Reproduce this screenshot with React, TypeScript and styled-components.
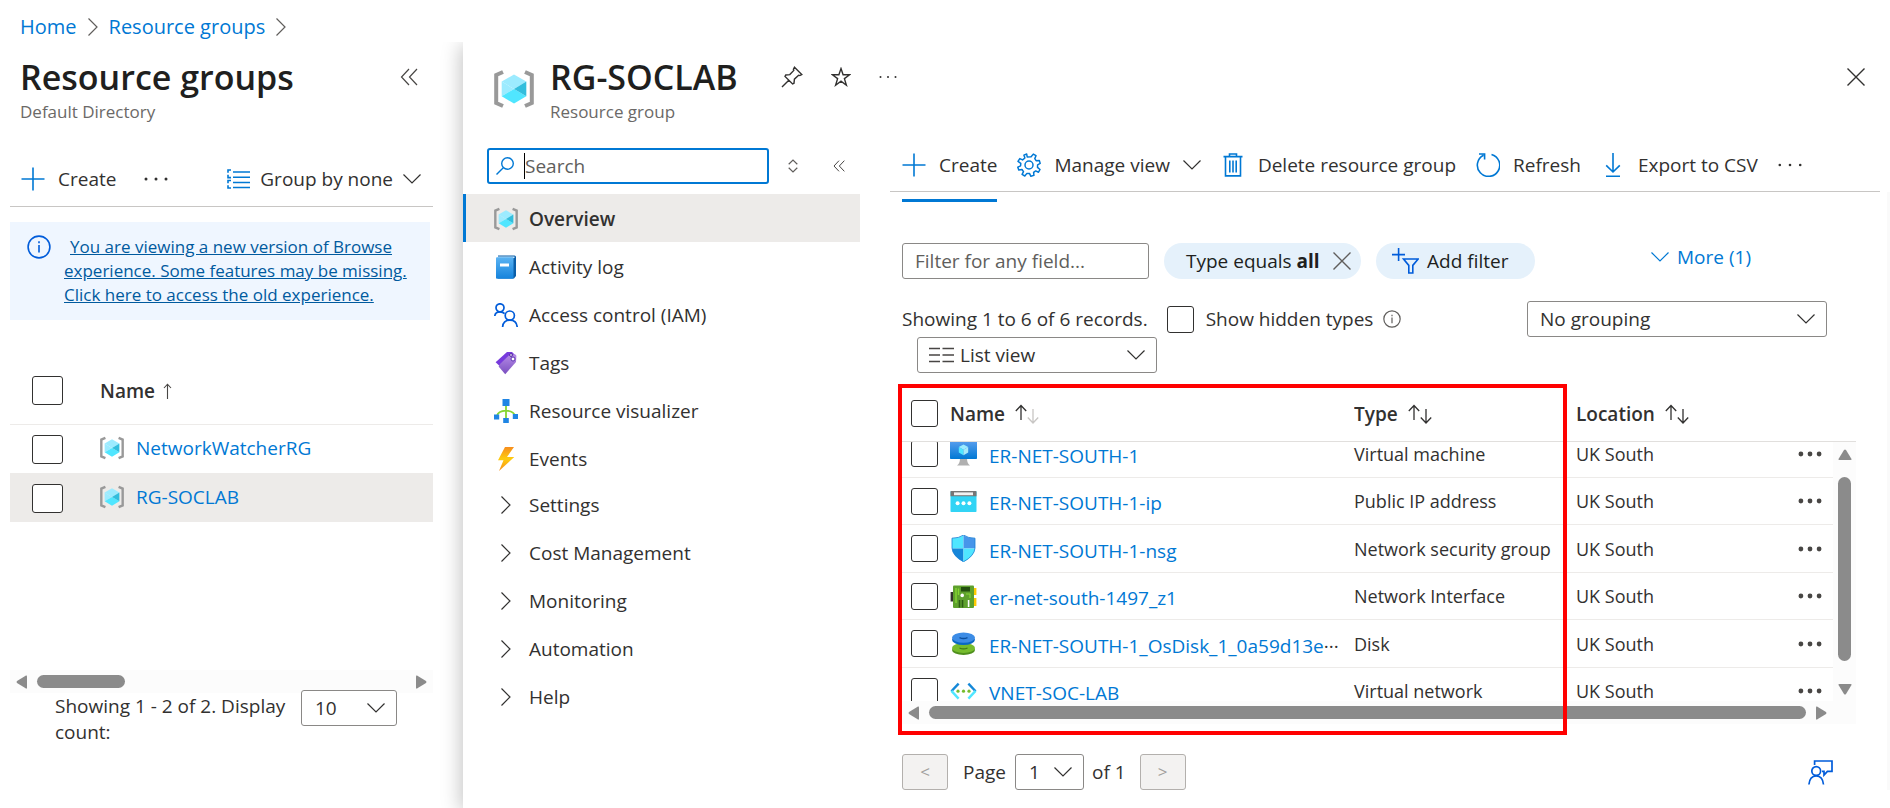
import React, { useLayoutEffect, useRef } from 'react';
import styled, { createGlobalStyle } from 'styled-components';

const GlobalStyle = createGlobalStyle`
  *, *::before, *::after { box-sizing: border-box; }
  body {
    margin: 0;
    background: #fff;
    color: #323130;
    font-family: 'Open Sans', 'Noto Sans', sans-serif;
    font-size: 19px;
    line-height: 24px;
  }
  button, input, select { font: inherit; color: inherit; }
  svg { display: block; flex: none; }
`;

/* ---------- shared parts ---------- */

const Page = styled.div`
  min-height: 100vh;
  display: flex;
  flex-direction: column;
`;

const Breadcrumb = styled.nav`
  height: 42px;
  padding: 12px 20px 0;
  display: flex;
  align-items: center;
  gap: 11px;
  font-size: 20px;
  line-height: 30px;
  color: #605e5c;
`;

const Link = styled.a`
  color: #0078d4;
  text-decoration: none;
`;

const Blades = styled.div`
  flex: 1;
  display: flex;
`;

const PlainButton = styled.button`
  display: flex;
  align-items: center;
  gap: 13px;
  padding: 0;
  border: 0;
  background: none;
  white-space: nowrap;
  cursor: pointer;
`;

const Title = styled.h1`
  margin: 0;
  font-size: 34px;
  line-height: 46px;
  font-weight: 600;
  color: #201f1e;
  white-space: nowrap;
`;

const Subtitle = styled.div`
  font-size: 17px;
  line-height: 24px;
  color: #6b6967;
`;

const Checkbox = styled.input.attrs({ type: 'checkbox' })<{ $w?: number; $h?: number }>`
  appearance: none;
  display: block;
  flex: none;
  margin: 0;
  width: ${p => p.$w ?? 27}px;
  height: ${p => p.$h ?? 27}px;
  border: 1px solid #323130;
  border-radius: 3px;
  background: #fff;
`;

const SelectBox = styled.div<{ $w: number }>`
  display: grid;
  grid-template-columns: 1fr auto;
  align-items: center;
  width: ${p => p.$w}px;
  height: 36px;
  > * { grid-row: 1; }
  > svg { grid-column: 2; margin-right: 12px; pointer-events: none; z-index: 1; }
  > svg:first-child { grid-column: 1; margin-left: 12px; }
`;

const Select = styled.select<{ $pad?: number }>`
  grid-column: 1 / 3;
  appearance: none;
  width: 100%;
  height: 36px;
  padding: 0 0 0 ${p => p.$pad ?? 12}px;
  border: 1px solid #8a8886;
  border-radius: 3px;
  background: #fff;
`;

/* ---------- icons ---------- */

type ChevronProps = { dir: 'right' | 'down'; color?: string };

const Chevron = ({ dir, color = '#323130' }: ChevronProps) =>
  dir === 'down' ? (
    <svg width="18" height="18" viewBox="0 0 18 18" fill="none" stroke={color} strokeWidth="1.2">
      <path d="M0.5 4.5 9 13 17.5 4.5" />
    </svg>
  ) : (
    <svg width="10" height="18" viewBox="0 0 10 18" fill="none" stroke={color} strokeWidth="1.2">
      <path d="M0.5 0.5 9 9 0.5 17.5" />
    </svg>
  );

const DoubleLeft = ({ size = 18 }: { size?: number }) => (
  <svg width={size} height={size} viewBox="0 0 18 18" fill="none" stroke="#484644" strokeWidth={size < 18 ? 1.5 : 1.2}>
    <path d="M9 1 1.5 9 9 17M17 1 9.5 9 17 17" />
  </svg>
);

const Plus = () => (
  <svg width="24" height="24" viewBox="0 0 24 24" fill="none" stroke="#0078d4" strokeWidth="1.6">
    <path d="M12 0.5V23.5M0.5 12H23.5" />
  </svg>
);

const Dots = ({ r = 1.5, color = '#323130', w = 24 }: { r?: number; color?: string; w?: number }) => (
  <svg width={w} height="8" viewBox={`0 0 ${w} 8`} fill={color}>
    <circle cx={r + 0.5} cy="4" r={r} />
    <circle cx={w / 2} cy="4" r={r} />
    <circle cx={w - r - 0.5} cy="4" r={r} />
  </svg>
);

const GroupIcon = () => (
  <svg width="23" height="20" viewBox="0 0 23 20" fill="none" stroke="#0078d4" strokeWidth="1.6">
    <path d="M6 3H23M6 8.2H23M6 13.5H23M6 18.5H23" />
    <path d="M4 1H1V3.8M1 5.8V8.6H4M4 11.5H1V14.2M1 16.2V19H4" />
  </svg>
);

const InfoIcon = ({ size, color }: { size: number; color: string }) => (
  <svg width={size} height={size} viewBox="0 0 24 24" fill="none" stroke={color} strokeWidth="1.6">
    <circle cx="12" cy="12" r="10.9" />
    <path d="M12 10V17.5M12 6.2V8.2" />
  </svg>
);

const ResourceGroupIcon = ({ size }: { size: number }) => (
  <svg width={size} height={size} viewBox="0 0 40 40" fill="none">
    <path d="M9 3 2.2 6V34L9 37M31 3 37.8 6V34L31 37" stroke="#999" strokeWidth="4" />
    <path d="M20 5.5 32.3 12.6 20 20 7.7 12.6Z" fill="#9cebff" />
    <path d="M7.7 12.6 20 20 7.7 27.2Z" fill="#9cebff" />
    <path d="M7.7 27.2 20 20V34.5Z" fill="#50e6ff" />
    <path d="M20 20 32.3 27.2 20 34.5Z" fill="#50e6ff" />
    <path d="M32.3 12.6V27.2L20 20Z" fill="#32bedd" />
  </svg>
);

const PinIcon = () => (
  <svg width="22" height="22" viewBox="0 0 22 22" fill="none" stroke="#323130" strokeWidth="1.4">
    <path d="M13.5 1.2 20.8 8.5 18.8 9.6 17.6 9.2 13.4 13.2 13 17.2 11.6 18 4 10.4 4.8 9 8.8 8.6 12.8 4.4 12.4 3.2ZM7.8 14.2 1 21" />
  </svg>
);

const StarIcon = () => (
  <svg width="20" height="20" viewBox="0 0 20 20" fill="none" stroke="#323130" strokeWidth="1.4">
    <path d="M10 1.6 12.1 7.7H18.7L13.4 11.6 15.4 18.2 10 14.2 4.6 18.2 6.6 11.6 1.3 7.7H7.9Z" />
  </svg>
);

const CloseIcon = ({ color = '#323130' }: { color?: string }) => (
  <svg width="18" height="18" viewBox="0 0 18 18" fill="none" stroke={color} strokeWidth="1.4">
    <path d="M0.5 0.5 17.5 17.5M17.5 0.5 0.5 17.5" />
  </svg>
);

const SearchIcon = () => (
  <svg width="18" height="18" viewBox="0 0 18 18" fill="none" stroke="#0078d4" strokeWidth="1.4">
    <circle cx="11.5" cy="6.5" r="5.8" />
    <path d="M7.3 10.7 0.5 17.5" />
  </svg>
);

const SortIcon = () => (
  <svg width="10" height="14" viewBox="0 0 10 14" fill="none" stroke="#605e5c" strokeWidth="1.2">
    <path d="M0.7 5.2 5 1 9.3 5.2M0.7 8.8 5 13 9.3 8.8" />
  </svg>
);

const BookIcon = () => (
  <svg width="24" height="24" viewBox="0 0 24 24">
    <defs>
      <linearGradient id="book" x1="0" y1="0" x2="0" y2="1">
        <stop offset="0" stopColor="#5ab3f3" />
        <stop offset="1" stopColor="#1583dc" />
      </linearGradient>
    </defs>
    <path d="M4 0.5H20.5Q22 0.5 22 2V21L20 23.5H4Z" fill="#0b5ea8" />
    <path d="M4 1.5H20.5V3H4Z" fill="#cfe8fb" />
    <rect x="2" y="2.3" width="17.5" height="21.4" rx="1" fill="url(#book)" />
    <rect x="6" y="8.5" width="9" height="3" fill="#fff" />
  </svg>
);

const PeopleIcon = () => (
  <svg width="24" height="24" viewBox="0 0 24 24" fill="none" stroke="#015cda" strokeWidth="1.7">
    <circle cx="6" cy="4.8" r="4" />
    <path d="M0.8 13C1 10.5 3 8.8 6 8.8 8 8.8 9.5 9.4 10.6 10.6" />
    <circle cx="15.8" cy="12.6" r="4.6" />
    <path d="M8.6 24C9 19.8 11.6 17.2 15.8 17.2S22.8 19.8 23.2 24" />
  </svg>
);

const TagIcon = () => (
  <svg width="24" height="24" viewBox="0 0 24 24">
    <defs>
      <linearGradient id="tag" x1="0" y1="0" x2="0" y2="1">
        <stop offset="0" stopColor="#b58be6" />
        <stop offset="1" stopColor="#7a4fc0" />
      </linearGradient>
    </defs>
    <path d="M1.6 11.2 13 0.9H18L21 4 9.5 18.5Z" fill="#773adc" />
    <path d="M6 13 15.8 3.6H21.2Q22.4 3.8 22.4 5.2L22 11 11.2 23.2 4.6 15.6Z" fill="url(#tag)" />
    <circle cx="19" cy="8" r="2" fill="#fff" stroke="#5b2fb0" />
    <circle cx="17" cy="4" r="1.4" fill="#fff" stroke="#4a1f9c" />
  </svg>
);

const VisualizerIcon = () => (
  <svg width="24" height="24" viewBox="0 0 24 24">
    <path d="M12 6V19M3 17Q4 12 12 11.6 20 12 21 17" fill="none" stroke="#86d633" strokeWidth="1.8" />
    <path d="M8.5 0H15.5V7H8.5ZM0 15.5H5.2V20.5H0ZM18.8 15H24V20H18.8ZM9.2 19H14.8V24H9.2Z" fill="#1f85e4" />
  </svg>
);

const BoltIcon = () => (
  <svg width="24" height="24" viewBox="0 0 24 24">
    <defs>
      <linearGradient id="bolt" x1="0" y1="0" x2="0" y2="1">
        <stop offset="0" stopColor="#f78d1e" />
        <stop offset="0.5" stopColor="#fecd0f" />
        <stop offset="1" stopColor="#f78d1e" />
      </linearGradient>
    </defs>
    <path d="M11 0H20L13 10H20.3L5 24 9.5 13.2H4Z" fill="url(#bolt)" />
  </svg>
);

const GearIcon = () => (
  <svg width="24" height="24" viewBox="0 0 24 24" fill="none" stroke="#0078d4" strokeWidth="1.5" strokeLinejoin="round">
    <circle cx="12" cy="12" r="4" />
    <path d="M10.2 4 9.7 1 6.9 2.1 7.9 5 5.6 6.9 2.8 5.6 1 8.4 3.8 10.3 3.6 12.8 0.8 14.2 1.8 17.1 5 16.5 6.5 18.6 5.1 21.4 7.8 23 9.9 20.4 12.6 20.6 13.8 23.3 16.9 22.4 16.6 19.3 18.7 17.9 21.5 19.2 23 16.5 20.5 14.4 20.6 11.8 23.2 10.4 22.3 7.4 19.1 7.7 17.8 5.6 19 2.7 16.3 1.1 14.1 3.8Z" />
  </svg>
);

const TrashIcon = () => (
  <svg width="24" height="24" viewBox="0 0 24 24" fill="none" stroke="#0078d4" strokeWidth="1.6">
    <path d="M2.5 3.6H21.5M8.5 3.4V1H15.5V3.4M4.5 4V22.9H19.5V4" />
    <path d="M8.8 7.5V19.5M12 7.5V19.5M15.2 7.5V19.5" />
  </svg>
);

const RefreshIcon = () => (
  <svg width="24" height="24" viewBox="0 0 24 24" fill="none" stroke="#0078d4" strokeWidth="1.6">
    <path d="M15.5 1.4A11.2 11.2 0 1 1 7.5 2.2M3 1H8.6V6.5" />
  </svg>
);

const DownloadIcon = () => (
  <svg width="24" height="24" viewBox="0 0 24 24" fill="none" stroke="#0078d4" strokeWidth="1.6">
    <path d="M12 0V18.5M5.2 12.4 12 19 18.8 12.4M5 23.2H19" />
  </svg>
);

const AddFilterIcon = () => (
  <svg width="27" height="26" viewBox="0 0 27 26" fill="none" stroke="#015cda" strokeWidth="1.6">
    <path d="M6.6 0V13M0 6.6H13" />
    <path d="M11.5 11H26.2L20.8 17.4V25H16.8V17.4Z" />
  </svg>
);

const ListIcon = () => (
  <svg width="25" height="16" viewBox="0 0 25 16" fill="none" stroke="#484644" strokeWidth="1.7">
    <path d="M0 1.5H11M0 8H11M0 14.5H11M13.5 1.5H25M13.5 8H25M13.5 14.5H25" />
  </svg>
);

const SortArrows = ({ faded }: { faded?: boolean }) => (
  <svg width="24" height="20" viewBox="0 0 24 20" fill="none" strokeWidth="1.3">
    <path d="M6 16V2M0.8 7 6 1.5 11.2 7" stroke="#323130" />
    <path d="M18 5V18.5M12.8 13.5 18 19 23.2 13.5" stroke={faded ? '#c8c6c4' : '#323130'} />
  </svg>
);

const ArrowUp = () => (
  <svg width="9" height="16" viewBox="0 0 9 16" fill="none" stroke="#484644" strokeWidth="1.1">
    <path d="M4.5 16V1.5M1 5 4.5 1.2 8 5" />
  </svg>
);

const VmIcon = () => (
  <svg width="27" height="27" viewBox="0 0 27 27">
    <defs>
      <linearGradient id="vm" x1="0" y1="0" x2="0" y2="1">
        <stop offset="0" stopColor="#5ea0ef" />
        <stop offset="1" stopColor="#0078d4" />
      </linearGradient>
    </defs>
    <path d="M10 18H17Q17 23.5 20 25.5H7Q10 23.5 10 18Z" fill="#b0b0b0" />
    <rect width="27" height="19" rx="0.8" fill="url(#vm)" />
    <path d="M13.5 4.4 18.2 7.1 13.5 9.8 8.8 7.1Z" fill="#9cebff" />
    <path d="M8.8 7.1 13.5 9.8V15.2L8.8 12.5Z" fill="#50e6ff" />
    <path d="M18.2 7.1 13.5 9.8V15.2L18.2 12.5Z" fill="#a9e9f8" />
  </svg>
);

const IpIcon = () => (
  <svg width="27" height="27" viewBox="0 0 27 27">
    <rect x="0.5" y="3" width="26" height="21" rx="0.8" fill="#32d4f5" />
    <path d="M0.5 3.8Q0.5 3 1.3 3H25.7Q26.5 3 26.5 3.8V8.3H0.5Z" fill="#767676" />
    <rect x="4" y="4.4" width="19" height="2.8" fill="#f2f2f2" />
    <circle cx="7.6" cy="15.2" r="2" fill="#fff" />
    <circle cx="13.5" cy="15.2" r="2" fill="#fff" />
    <circle cx="19.4" cy="15.2" r="2" fill="#fff" />
  </svg>
);

const ShieldIcon = () => (
  <svg width="27" height="27" viewBox="0 0 27 27">
    <path d="M13.5 0Q9 3.2 2 3.2V13.5H13.5Z" fill="#50e6ff" />
    <path d="M13.5 0Q18 3.2 25 3.2V13.5H13.5Z" fill="#4795ea" />
    <path d="M2 13.5H13.5V27Q2.6 21 2 13.5Z" fill="#1686d9" />
    <path d="M25 13.5H13.5V27Q24.4 21 25 13.5Z" fill="#50e6ff" />
    <path d="M13.5 0Q9 3.2 2 3.2V13Q2.6 21 13.5 26.8 24.4 21 25 13V3.2Q18 3.2 13.5 0Z" fill="none" stroke="#1b7fd4" strokeWidth="0.8" />
  </svg>
);

const NicIcon = () => (
  <svg width="27" height="27" viewBox="0 0 27 27">
    <rect x="0.6" y="9" width="3" height="9.5" fill="#32322f" />
    <rect x="22" y="5" width="4.4" height="7" fill="#ffca00" />
    <rect x="22" y="15" width="4.4" height="8" fill="#ffca00" />
    <rect x="3" y="2.5" width="21" height="22.5" rx="1" fill="#5ea02d" />
    <rect x="11" y="4" width="9" height="4.5" fill="#24500f" />
    <path d="M6 5V20M8.5 5.5V12" stroke="#86d633" strokeWidth="1.4" />
    <circle cx="12.2" cy="12.4" r="1.8" fill="#fff" />
    <path d="M9.5 17V24.5M12.5 17V24.5" stroke="#2b5c12" strokeWidth="1.6" />
    <path d="M18.6 17V24" stroke="#fff" strokeWidth="1.6" />
    <path d="M16 11H20V15" stroke="#86d633" strokeWidth="1.2" fill="none" />
  </svg>
);

const DiskIcon = () => (
  <svg width="27" height="27" viewBox="0 0 27 27">
    <ellipse cx="13.5" cy="20" rx="11.5" ry="5" fill="#4f8f1d" />
    <ellipse cx="13.5" cy="18" rx="11.5" ry="5" fill="#76bc2d" />
    <ellipse cx="13.5" cy="9.8" rx="11.5" ry="5.2" fill="#0a68c4" />
    <ellipse cx="13.5" cy="7.6" rx="11.5" ry="5.2" fill="#3c8ce6" />
    <path d="M9.5 7.6Q13.5 9.4 17.5 7.6" stroke="#0b4f9e" strokeWidth="1.3" fill="none" />
    <path d="M9.5 18Q13.5 19.8 17.5 18" stroke="#3f7a12" strokeWidth="1.3" fill="none" />
  </svg>
);

const VnetIcon = () => (
  <svg width="27" height="27" viewBox="0 0 27 27" fill="none" strokeWidth="2.4">
    <path d="M8.6 5.6 1.4 13.3" stroke="#1488d8" />
    <path d="M1.4 12.9 8.6 20.6" stroke="#50e6ff" />
    <path d="M18.4 5.6 25.6 13.3" stroke="#1488d8" />
    <path d="M25.6 12.9 18.4 20.6" stroke="#50e6ff" />
    <g fill="#76bc2d">
      <circle cx="8" cy="13.2" r="1.6" />
      <circle cx="13.5" cy="13.2" r="1.6" />
      <circle cx="19" cy="13.2" r="1.6" />
    </g>
  </svg>
);

const FeedbackIcon = () => (
  <svg width="25" height="25" viewBox="0 0 25 25" fill="none" stroke="#015cda" strokeWidth="1.7">
    <path d="M6.6 5V1H24V11.4H19.4L16 15V11.4H14" />
    <circle cx="8.2" cy="11" r="4.4" />
    <path d="M0.9 24.5C1.4 19 4 16 8.2 16S15 19 15.5 24.5" />
  </svg>
);

/* ---------- scrollbars ---------- */

const HBar = styled.div`
  display: flex;
  align-items: center;
  gap: 10px;
  height: 23px;
  padding: 0 6px;
  background: #fcfcfc;
`;

const HTrack = styled.div`
  flex: 1;
`;

const Thumb = styled.div<{ $len: string }>`
  width: ${p => p.$len};
  height: 13px;
  border-radius: 7px;
  background: #8b8b8b;
`;

const VBar = styled.div`
  display: flex;
  flex-direction: column;
  align-items: center;
  gap: 17px;
  padding: 7px 0 6px;
  background: #fcfcfc;
`;

const VTrack = styled.div`
  flex: 1;
  width: 13px;
`;

const VThumb = styled.div`
  height: 97%;
  border-radius: 7px;
  background: #8b8b8b;
`;

const Triangle = ({ dir }: { dir: 'left' | 'right' | 'up' | 'down' }) => {
  const d = {
    left: 'M10 0.5Q11 0 11 1.5V12.5Q11 14 10 13.5L1 8Q0 7 1 6Z',
    right: 'M1 0.5Q0 0 0 1.5V12.5Q0 14 1 13.5L10 8Q11 7 10 6Z',
    up: 'M0.5 10Q0 11 1.5 11H12.5Q14 11 13.5 10L8 1Q7 0 6 1Z',
    down: 'M0.5 1Q0 0 1.5 0H12.5Q14 0 13.5 1L8 10Q7 11 6 10Z',
  }[dir];
  const wide = dir === 'up' || dir === 'down';
  return (
    <svg width={wide ? 14 : 11} height={wide ? 11 : 14} viewBox={wide ? '0 0 14 11' : '0 0 11 14'} fill="#8b8b8b">
      <path d={d} />
    </svg>
  );
};

/* ---------- left blade ---------- */

const ListBlade = styled.section`
  flex: none;
  width: 463px;
  padding: 12px 30px 0 10px;
  display: flex;
  flex-direction: column;
`;

const ListHeader = styled.header`
  display: flex;
  justify-content: space-between;
  align-items: flex-start;
  height: 98px;
  padding: 0 15px 0 10px;
  > button { margin-top: 14px; }
`;

const ListToolbar = styled.div`
  display: flex;
  align-items: center;
  gap: 28px;
  height: 55px;
  padding: 0 12px 0 11px;
  border-bottom: 1px solid #c8c6c4;
  > :last-child { margin-left: auto; gap: 10px; }
`;

const Notice = styled.div`
  display: flex;
  gap: 13px;
  margin: 15px 3px 0 0;
  padding: 13px 16px 13px 17px;
  background: #eff6ff;
  font-size: 17px;
  a { color: #005a9e; text-indent: 6px; display: block; }
`;

const GroupTable = styled.table`
  width: 100%;
  margin-top: 34px;
  border-collapse: collapse;
  th { height: 70px; padding: 4px 0 0; border-bottom: 1px solid #edebe9; text-align: left; font-weight: 600; }
  td { height: 49px; padding: 2px 0 0; }
  th:first-child, td:first-child { width: 90px; padding-left: 22px; }
`;

const GroupRow = styled.tr<{ $active?: boolean }>`
  background: ${p => (p.$active ? '#edebe9' : 'transparent')};
`;

const NameCell = styled.div`
  display: flex;
  align-items: center;
  gap: 12px;
`;

const GroupName = styled(NameCell)`
  padding-bottom: 4px;
`;

const GroupHead = styled(NameCell)`
  gap: 8px;
`;

const ListFooter = styled.footer`
  display: flex;
  align-items: flex-start;
  justify-content: space-between;
  height: 115px;
  padding: 0 36px 0 45px;
  line-height: 26px;
  label { width: 236px; }
  > div { margin-top: -3px; }
`;

const Spacer = styled.div`
  flex: 1;
`;

/* ---------- detail blade ---------- */

const DetailBlade = styled.main`
  flex: 1;
  min-width: 0;
  display: flex;
  flex-direction: column;
  background: #fff;
  box-shadow: -3px 3px 18px rgba(0, 0, 0, 0.22);
  clip-path: inset(0 0 0 -30px);
`;

const DetailHeader = styled.header`
  display: flex;
  align-items: flex-start;
  height: 104px;
  padding: 12px 25px 0 31px;
  > svg { margin: 15px 16px 0 0; }
  > button { margin-top: 14px; }
`;

const HeaderActions = styled.div`
  display: flex;
  align-items: center;
  gap: 28px;
  height: 46px;
  margin-left: 43px;
`;

const DetailBody = styled.div`
  flex: 1;
  display: flex;
`;

const Sidebar = styled.nav`
  flex: none;
  width: 397px;
`;

const SearchRow = styled.div`
  display: flex;
  align-items: center;
  height: 40px;
  margin-bottom: 8px;
  padding: 0 20px 0 24px;
  > button:nth-of-type(1) { margin-left: 19px; }
  > button:nth-of-type(2) { margin-left: 35px; }
`;

const SearchField = styled.label`
  display: flex;
  align-items: center;
  flex: 1;
  height: 36px;
  padding-left: 7px;
  border: 2px solid #0078d4;
  border-radius: 3px;
`;

const Caret = styled.span`
  width: 1px;
  height: 26px;
  margin-left: 10px;
  background: #000;
`;

const SearchInput = styled.input`
  flex: 1;
  min-width: 0;
  padding: 0;
  border: 0;
  outline: 0;
  background: none;
  &::placeholder { color: #605e5c; opacity: 1; }
`;

const Menu = styled.ul`
  margin: 0;
  padding: 0;
  list-style: none;
`;

const MenuLink = styled.a<{ $active?: boolean }>`
  display: flex;
  align-items: center;
  gap: 11px;
  height: 48px;
  padding-top: 2px;
  padding-left: 28px;
  border-left: 3px solid ${p => (p.$active ? '#0078d4' : 'transparent')};
  background: ${p => (p.$active ? '#edebe9' : 'transparent')};
  color: #323130;
  font-weight: ${p => (p.$active ? 600 : 400)};
  text-decoration: none;
`;

const MenuIcon = styled.span`
  display: flex;
  justify-content: center;
  width: 24px;
`;

const Groups = styled(Menu)`
  margin-top: -2px;
`;

const Content = styled.section`
  flex: 1;
  min-width: 0;
  margin-left: 30px;
`;

const CommandBar = styled.div`
  display: flex;
  align-items: center;
  gap: 20px;
  height: 46px;
  padding: 0 12px 8px;
  margin-right: 10px;
  border-bottom: 1px solid #c8c6c4;
`;

const ContentBody = styled.div`
  padding: 7px 60px 0 12px;
  border-right: 3px solid #fafafa;
`;

const TabMark = styled.div`
  width: 95px;
  height: 3px;
  background: #0078d4;
`;

const FilterRow = styled.div`
  display: flex;
  align-items: center;
  gap: 15px;
  margin-top: 41px;
`;

const FilterInput = styled.input`
  width: 247px;
  height: 36px;
  padding: 0 12px;
  border: 1px solid #8a8886;
  border-radius: 3px;
  &::placeholder { color: #605e5c; opacity: 1; }
`;

const Pill = styled(PlainButton)<{ $w: number; $gap: number; $left: number }>`
  width: ${p => p.$w}px;
  height: 36px;
  padding: 0 9px 0 ${p => p.$left}px;
  gap: ${p => p.$gap}px;
  border-radius: 18px;
  background: #e5f1fb;
  color: #201f1e;
`;

const MoreButton = styled(PlainButton)`
  margin: 0 76px 8px auto;
  gap: 8px;
  color: #0078d4;
`;

const SummaryRow = styled.div`
  display: flex;
  align-items: center;
  height: 36px;
  margin-top: 22px;
`;

const HiddenTypes = styled.label`
  display: flex;
  align-items: center;
  gap: 12px;
  margin: 0 10px 0 19px;
`;

const PushRight = styled.div`
  margin-left: auto;
`;

const ViewRow = styled.div`
  padding-left: 15px;
`;

const TableFrame = styled.div`
  position: relative;
  display: grid;
  grid-template-columns: 1fr 23px;
  grid-template-rows: 317px 23px;
  margin-top: 11px;
  margin-right: -29px;
`;

const Highlight = styled.div`
  position: absolute;
  top: 0;
  bottom: -11px;
  left: -4px;
  right: 289px;
  border: 4px solid #f00;
  pointer-events: none;
  z-index: 2;
`;

const Viewport = styled.div`
  overflow: hidden;
`;

const ScrollColumn = styled.div`
  display: grid;
  grid-template-rows: 58px 1fr;
`;

const HeadCorner = styled.div`
  border-bottom: 1px solid #e1dfdd;
`;

const Corner = styled.div`
  background: #fcfcfc;
`;

const ResourceTable = styled.table`
  width: 100%;
  table-layout: fixed;
  border-collapse: separate;
  border-spacing: 0;
  th, td { padding: 0; text-align: left; }
  th {
    position: sticky;
    top: 0;
    z-index: 1;
    height: 58px;
    padding-top: 2px;
    background: #fff;
    border-bottom: 1px solid #e1dfdd;
    font-weight: 600;
  }
  td { height: 47px; border-bottom: 1px solid #edebe9; white-space: nowrap; }
  tr:nth-child(odd) td { height: 48px; }
  th:first-child, td:first-child { width: 48px; padding-left: 9px; }
`;

const TypeTh = styled.th`
  width: 222px;
`;
const LocationTh = styled.th`
  width: 222px;
`;
const MenuTh = styled.th`
  width: 35px;
`;

const HeadLabel = styled.div`
  display: flex;
  align-items: center;
  gap: 10px;
`;

const ResourceName = styled.span`
  padding-top: 4px;
`;

const PlainCell = styled.td`
  font-size: 18px;
`;

const Ellipsis = styled.span`
  color: #323130;
`;

const Pager = styled.div`
  display: flex;
  align-items: center;
  margin-top: 30px;
  margin-right: -6px;
`;

const PageButton = styled.button`
  width: 46px;
  height: 36px;
  padding: 0;
  border: 1px solid #b3b0ad;
  border-radius: 3px;
  background: #f3f2f1;
  color: #a19f9d;
  font-size: 17px;
  line-height: 16px;
`;

const PageText = styled.label`
  margin: 0 9px 0 15px;
`;

const OfText = styled.span`
  margin: 0 14px 0 8px;
`;

/* ---------- data ---------- */

const mainItems = [
  { label: 'Overview', icon: <ResourceGroupIcon size={24} />, active: true },
  { label: 'Activity log', icon: <BookIcon /> },
  { label: 'Access control (IAM)', icon: <PeopleIcon /> },
  { label: 'Tags', icon: <TagIcon /> },
  { label: 'Resource visualizer', icon: <VisualizerIcon /> },
  { label: 'Events', icon: <BoltIcon /> },
];

const groupItems = ['Settings', 'Cost Management', 'Monitoring', 'Automation', 'Help'];

const resources = [
  { name: 'ER-NET-SOUTH-1', type: 'Virtual machine', icon: <VmIcon /> },
  { name: 'ER-NET-SOUTH-1-ip', type: 'Public IP address', icon: <IpIcon /> },
  { name: 'ER-NET-SOUTH-1-nsg', type: 'Network security group', icon: <ShieldIcon /> },
  { name: 'er-net-south-1497_z1', type: 'Network Interface', icon: <NicIcon /> },
  { name: 'ER-NET-SOUTH-1_OsDisk_1_0a59d13e', type: 'Disk', icon: <DiskIcon />, cut: true },
  { name: 'VNET-SOC-LAB', type: 'Virtual network', icon: <VnetIcon /> },
];

/* ---------- page ---------- */

const GroupList = () => (
  <ListBlade>
    <ListHeader>
      <div>
        <Title>Resource groups</Title>
        <Subtitle>Default Directory</Subtitle>
      </div>
      <PlainButton aria-label="Collapse list"><DoubleLeft /></PlainButton>
    </ListHeader>
    <ListToolbar>
      <PlainButton><Plus />Create</PlainButton>
      <PlainButton aria-label="More commands"><Dots /></PlainButton>
      <PlainButton><GroupIcon />Group by none<Chevron dir="down" /></PlainButton>
    </ListToolbar>
    <Notice>
      <InfoIcon size={24} color="#015cda" />
      <a href="#browse">
        You are viewing a new version of Browse experience. Some features may be missing. Click here to access the old experience.
      </a>
    </Notice>
    <GroupTable>
      <thead>
        <tr>
          <th><Checkbox $w={31} $h={29} aria-label="Select all groups" /></th>
          <th><GroupHead>Name <ArrowUp /></GroupHead></th>
        </tr>
      </thead>
      <tbody>
        {['NetworkWatcherRG', 'RG-SOCLAB'].map(name => (
          <GroupRow key={name} $active={name === 'RG-SOCLAB'}>
            <td><Checkbox $w={31} $h={29} aria-label={`Select ${name}`} /></td>
            <td>
              <GroupName>
                <ResourceGroupIcon size={24} />
                <Link href="#group">{name}</Link>
              </GroupName>
            </td>
          </GroupRow>
        ))}
      </tbody>
    </GroupTable>
    <Spacer />
    <HBar>
      <Triangle dir="left" />
      <HTrack><Thumb $len="88px" /></HTrack>
      <Triangle dir="right" />
    </HBar>
    <ListFooter>
      <label htmlFor="display-count">Showing 1 - 2 of 2. Display count:</label>
      <SelectBox $w={96}>
        <Select id="display-count" $pad={13}><option>10</option></Select>
        <Chevron dir="down" />
      </SelectBox>
    </ListFooter>
  </ListBlade>
);

const SideMenu = () => (
  <Sidebar>
    <SearchRow>
      <SearchField>
        <SearchIcon />
        <Caret />
        <SearchInput placeholder="Search" aria-label="Search" />
      </SearchField>
      <PlainButton aria-label="Expand all"><SortIcon /></PlainButton>
      <PlainButton aria-label="Collapse menu"><DoubleLeft size={12} /></PlainButton>
    </SearchRow>
    <Menu>
      {mainItems.map(item => (
        <li key={item.label}>
          <MenuLink href="#menu" $active={item.active}>
            <MenuIcon>{item.icon}</MenuIcon>
            {item.label}
          </MenuLink>
        </li>
      ))}
    </Menu>
    <Groups>
      {groupItems.map(label => (
        <li key={label}>
          <MenuLink href="#menu">
            <MenuIcon><Chevron dir="right" /></MenuIcon>
            {label}
          </MenuLink>
        </li>
      ))}
    </Groups>
  </Sidebar>
);

const Resources = () => {
  const viewport = useRef<HTMLDivElement>(null);
  useLayoutEffect(() => {
    if (viewport.current) viewport.current.scrollTop = 12;
  }, []);

  return (
    <TableFrame>
      <Viewport ref={viewport}>
        <ResourceTable>
          <thead>
            <tr>
              <th><Checkbox aria-label="Select all resources" /></th>
              <th><HeadLabel>Name <SortArrows faded /></HeadLabel></th>
              <TypeTh><HeadLabel>Type <SortArrows /></HeadLabel></TypeTh>
              <LocationTh><HeadLabel>Location <SortArrows /></HeadLabel></LocationTh>
              <MenuTh aria-label="Row menu" />
            </tr>
          </thead>
          <tbody>
            {resources.map(r => (
              <tr key={r.name}>
                <td><Checkbox aria-label={`Select ${r.name}`} /></td>
                <td>
                  <NameCell>
                    {r.icon}
                    <ResourceName>
                      <Link href="#resource">{r.name}</Link>
                      {r.cut && <Ellipsis>···</Ellipsis>}
                    </ResourceName>
                  </NameCell>
                </td>
                <PlainCell>{r.type}</PlainCell>
                <PlainCell>UK South</PlainCell>
                <td><PlainButton aria-label="Row actions"><Dots r={2.4} color="#484644" /></PlainButton></td>
              </tr>
            ))}
          </tbody>
        </ResourceTable>
      </Viewport>
      <ScrollColumn>
        <HeadCorner />
        <VBar>
          <Triangle dir="up" />
          <VTrack><VThumb /></VTrack>
          <Triangle dir="down" />
        </VBar>
      </ScrollColumn>
      <HBar>
        <Triangle dir="left" />
        <HTrack><Thumb $len="100%" /></HTrack>
        <Triangle dir="right" />
      </HBar>
      <Corner />
      <Highlight />
    </TableFrame>
  );
};

const App = () => (
  <Page>
    <GlobalStyle />
    <Breadcrumb>
      <Link href="#home">Home</Link>
      <Chevron dir="right" color="#605e5c" />
      <Link href="#groups">Resource groups</Link>
      <Chevron dir="right" color="#605e5c" />
    </Breadcrumb>
    <Blades>
      <GroupList />
      <DetailBlade>
        <DetailHeader>
          <ResourceGroupIcon size={40} />
          <div>
            <Title>RG-SOCLAB</Title>
            <Subtitle>Resource group</Subtitle>
          </div>
          <HeaderActions>
            <PlainButton aria-label="Pin"><PinIcon /></PlainButton>
            <PlainButton aria-label="Favorite"><StarIcon /></PlainButton>
            <PlainButton aria-label="More"><Dots r={1} w={18} /></PlainButton>
          </HeaderActions>
          <Spacer />
          <PlainButton aria-label="Close"><CloseIcon /></PlainButton>
        </DetailHeader>
        <DetailBody>
          <SideMenu />
          <Content>
            <CommandBar>
              <PlainButton><Plus />Create</PlainButton>
              <PlainButton><GearIcon />Manage view<Chevron dir="down" /></PlainButton>
              <PlainButton><TrashIcon />Delete resource group</PlainButton>
              <PlainButton><RefreshIcon />Refresh</PlainButton>
              <PlainButton><DownloadIcon />Export to CSV</PlainButton>
              <PlainButton aria-label="More commands"><Dots r={1.3} /></PlainButton>
            </CommandBar>
            <ContentBody>
              <TabMark />
              <FilterRow>
                <FilterInput placeholder="Filter for any field..." aria-label="Filter for any field" />
                <Pill $w={197} $gap={13} $left={22}>
                  <span>Type equals <b>all</b></span>
                  <CloseIcon color="#605e5c" />
                </Pill>
                <Pill $w={159} $gap={8} $left={16}>
                  <AddFilterIcon />
                  Add filter
                </Pill>
                <MoreButton><Chevron dir="down" color="#0078d4" />More (1)</MoreButton>
              </FilterRow>
              <SummaryRow>
                <span>Showing 1 to 6 of 6 records.</span>
                <HiddenTypes><Checkbox />Show hidden types</HiddenTypes>
                <InfoIcon size={18} color="#605e5c" />
                <PushRight>
                  <SelectBox $w={300}>
                    <Select aria-label="Grouping"><option>No grouping</option></Select>
                    <Chevron dir="down" />
                  </SelectBox>
                </PushRight>
              </SummaryRow>
              <ViewRow>
                <SelectBox $w={240}>
                  <ListIcon />
                  <Select aria-label="View" $pad={42}><option>List view</option></Select>
                  <Chevron dir="down" />
                </SelectBox>
              </ViewRow>
              <Resources />
              <Pager>
                <PageButton aria-label="Previous page">&lt;</PageButton>
                <PageText htmlFor="page">Page</PageText>
                <SelectBox $w={69}>
                  <Select id="page" $pad={13}><option>1</option></Select>
                  <Chevron dir="down" />
                </SelectBox>
                <OfText>of 1</OfText>
                <PageButton aria-label="Next page">&gt;</PageButton>
                <Spacer />
                <PlainButton aria-label="Feedback"><FeedbackIcon /></PlainButton>
              </Pager>
            </ContentBody>
          </Content>
        </DetailBody>
      </DetailBlade>
    </Blades>
  </Page>
);

export default App;
